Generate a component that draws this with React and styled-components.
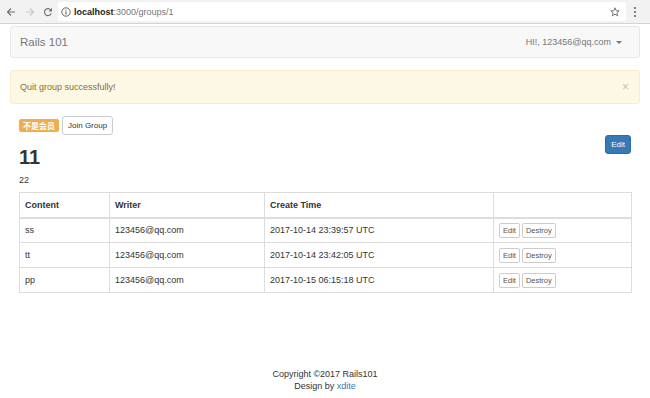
import React from 'react'
import styled, { createGlobalStyle } from 'styled-components'

const Global = createGlobalStyle`
  html, body { margin: 0; padding: 0; background: #fff; }
  body { font-family: "Liberation Sans", Arial, "Noto Sans CJK SC", sans-serif; color: #333; }
  * { box-sizing: border-box; }
`

const Window = styled.div`
  width: 650px;
  height: 398px;
  display: flex;
  flex-direction: column;
  overflow: hidden;
`

const Chrome = styled.div`
  height: 24px;
  flex: none;
  display: flex;
  align-items: center;
  background: #f2f2f2;
  border-bottom: 1px solid #d3d3d3;
  padding: 0 6px 0 2px;
`

const NavIcon = styled.span`
  width: 18px;
  height: 18px;
  display: flex;
  align-items: center;
  justify-content: center;
  color: ${p => (p.dim ? '#c8c8c8' : '#6e6e6e')};
  margin-right: ${p => p.gap || 0}px;
`

const Omnibox = styled.div`
  flex: 1;
  height: 19px;
  margin-left: 1px;
  background: #fff;
  border-radius: 2px;
  display: flex;
  align-items: center;
  padding: 0 6px 0 3px;
  font-size: 9px;
  color: #777;
`

const Host = styled.span`
  color: #222;
  font-weight: bold;
`

const Url = styled.span`
  margin-left: 3px;
  flex: 1;
`

const Page = styled.div`
  flex: 1;
  display: flex;
  flex-direction: column;
  padding: 2px 10px 0;
`

const Navbar = styled.div`
  height: 32px;
  background: #f8f8f8;
  border: 1px solid #e7e7e7;
  border-radius: 3px;
  display: flex;
  align-items: center;
  justify-content: space-between;
  padding: 0 9px;
  color: #777;
`

const Brand = styled.span`
  font-size: 11.5px;
`

const UserMenu = styled.span`
  font-size: 9px;
  display: flex;
  align-items: center;
  gap: 4px;
  margin-right: 8px;
`

const Caret = styled.span`
  width: 0;
  height: 0;
  border-left: 3px solid transparent;
  border-right: 3px solid transparent;
  border-top: 3px solid #777;
  margin-left: 1px;
`

const Alert = styled.div`
  margin-top: 12px;
  height: 34px;
  background: #fcf8e3;
  border: 1px solid #faebcc;
  border-radius: 3px;
  display: flex;
  align-items: center;
  justify-content: space-between;
  padding: 0 9px;
  color: #8a6d3b;
  font-size: 9px;
`

const Close = styled.span`
  color: #c9c3b0;
  font-size: 12px;
  margin-right: 1px;
`

const Content = styled.div`
  padding: 12px 9px 0;
  display: flex;
  flex-direction: column;
`

const TopRow = styled.div`
  display: flex;
  align-items: center;
  gap: 3px;
  height: 19px;
`

const Label = styled.span`
  background: #f0ad4e;
  color: #fff;
  font-weight: bold;
  font-size: 8px;
  border-radius: 2px;
  padding: 0 4px;
  height: 13px;
  display: flex;
  align-items: center;
`

const Button = styled.span`
  display: inline-flex;
  align-items: center;
  justify-content: center;
  border: 1px solid ${p => (p.primary ? '#2e6da4' : '#ccc')};
  background: ${p => (p.primary ? '#337ab7' : '#fff')};
  color: ${p => (p.primary ? '#fff' : p.small ? '#555' : '#333')};
  border-radius: ${p => (p.small ? '2px' : '3px')};
  font-size: ${p => (p.small ? '7.5px' : '8px')};
  height: ${p => (p.small ? '15px' : '19px')};
  padding: ${p => (p.small ? '0 3px' : '0 5px')};
`

const TitleRow = styled.div`
  display: flex;
  justify-content: space-between;
  align-items: flex-start;
  height: 39px;
`

const Title = styled.h1`
  margin: 11px 0 0;
  font-size: 20px;
  font-weight: bold;
  line-height: 22px;
  color: #333;
`

const Desc = styled.p`
  margin: 0;
  font-size: 9px;
  line-height: 12px;
  height: 18px;
`

const Table = styled.table`
  width: 612px;
  border-collapse: collapse;
  border: 1px solid #ddd;
  font-size: 9px;
  table-layout: fixed;
`

const Th = styled.th`
  text-align: left;
  font-weight: bold;
  height: 25px;
  padding: 0 5px;
  border: 1px solid #ddd;
  border-bottom-width: 2px;
  width: ${p => p.w}px;
`

const Td = styled.td`
  height: 25px;
  padding: 0 5px;
  border: 1px solid #ddd;
`

const Actions = styled.div`
  display: flex;
  gap: 2px;
`

const Footer = styled.footer`
  margin-top: auto;
  margin-bottom: 6px;
  text-align: center;
  font-size: 9px;
  line-height: 12px;
  color: #333;
`

const Link = styled.a`
  color: #337ab7;
  text-decoration: none;
`

const rows = [
  { content: 'ss', writer: '123456@qq.com', time: '2017-10-14 23:39:57 UTC' },
  { content: 'tt', writer: '123456@qq.com', time: '2017-10-14 23:42:05 UTC' },
  { content: 'pp', writer: '123456@qq.com', time: '2017-10-15 06:15:18 UTC' },
]

export default function App() {
  return (
    <Window>
      <Global />
      <Chrome>
        <NavIcon gap={1}>
          <svg width="10" height="10" viewBox="0 0 10 10"><path d="M9 5H2M5 1.5L1.5 5L5 8.5" stroke="currentColor" strokeWidth="1.1" fill="none" /></svg>
        </NavIcon>
        <NavIcon dim>
          <svg width="10" height="10" viewBox="0 0 10 10"><path d="M1 5H8M5 1.5L8.5 5L5 8.5" stroke="currentColor" strokeWidth="1.1" fill="none" /></svg>
        </NavIcon>
        <NavIcon>
          <svg width="10" height="10" viewBox="0 0 10 10"><path d="M8.3 4A3.5 3.5 0 1 0 8.2 6.5" stroke="currentColor" strokeWidth="1.1" fill="none" /><path d="M9 1V4.4H5.6Z" fill="currentColor" /></svg>
        </NavIcon>
        <Omnibox>
          <svg width="10" height="10" viewBox="0 0 10 10"><circle cx="5" cy="5" r="4.2" stroke="#555" strokeWidth="0.9" fill="none" /><path d="M5 4.3V7.5M5 2.5V3.4" stroke="#555" strokeWidth="1" /></svg>
          <Url><Host>localhost</Host>:3000/groups/1</Url>
          <svg width="10" height="10" viewBox="0 0 10 10"><path d="M5 0.8L6.2 3.7L9.2 3.9L6.9 5.8L7.6 8.8L5 7.2L2.4 8.8L3.1 5.8L0.8 3.9L3.8 3.7Z" stroke="#555" strokeWidth="0.8" fill="none" /></svg>
        </Omnibox>
        <NavIcon>
          <svg width="4" height="12" viewBox="0 0 4 12"><circle cx="2" cy="2" r="1.1" fill="#666" /><circle cx="2" cy="6" r="1.1" fill="#666" /><circle cx="2" cy="10" r="1.1" fill="#666" /></svg>
        </NavIcon>
      </Chrome>
      <Page>
        <Navbar>
          <Brand>Rails 101</Brand>
          <UserMenu>HI!, 123456@qq.com<Caret /></UserMenu>
        </Navbar>
        <Alert>
          <span>Quit group successfully!</span>
          <Close>×</Close>
        </Alert>
        <Content>
          <TopRow>
            <Label>不是会员</Label>
            <Button>Join Group</Button>
          </TopRow>
          <TitleRow>
            <Title>11</Title>
            <Button primary>Edit</Button>
          </TitleRow>
          <Desc>22</Desc>
          <Table>
            <thead>
              <tr>
                <Th w={90}>Content</Th>
                <Th w={155}>Writer</Th>
                <Th w={229}>Create Time</Th>
                <Th w={138}></Th>
              </tr>
            </thead>
            <tbody>
              {rows.map(r => (
                <tr key={r.content}>
                  <Td>{r.content}</Td>
                  <Td>{r.writer}</Td>
                  <Td>{r.time}</Td>
                  <Td>
                    <Actions>
                      <Button small>Edit</Button>
                      <Button small>Destroy</Button>
                    </Actions>
                  </Td>
                </tr>
              ))}
            </tbody>
          </Table>
        </Content>
        <Footer>
          Copyright ©2017 Rails101<br />
          Design by <Link href="#">xdite</Link>
        </Footer>
      </Page>
    </Window>
  )
}
